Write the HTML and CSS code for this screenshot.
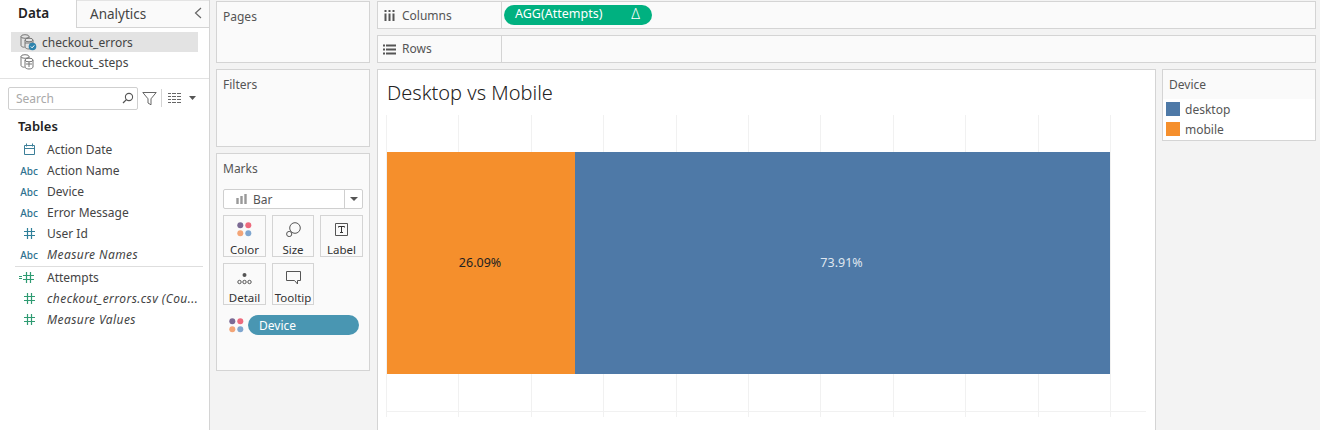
FILE: index.html
```html
<!DOCTYPE html>
<html lang="en">
<head>
<meta charset="utf-8">
<title>Desktop vs Mobile</title>
<link rel="stylesheet" href="styles.css">
</head>
<body>
<div class="app">
  <aside class="side">
    <div class="tabs">
      <div class="tab tab-active">Data</div>
      <div class="tab tab-other">Analytics</div>
      <div class="collapse"><svg width="8" height="12" viewBox="0 0 8 12"><path d="M7 1 1.500 6 7 11" fill="none" stroke="#666" stroke-width="1.200"/></svg></div>
    </div>
    <div class="sources">
      <div class="source source-on">
        <svg class="dbicon" width="18" height="18" viewBox="0 0 18 18"><g fill="none" stroke="#777"><ellipse cx="6" cy="3.500" rx="4" ry="1.800"/><path d="M2 3.500v9c0 1 2 1.800 3.500 1.800M10 3.500v2"/><ellipse cx="10" cy="7" rx="4" ry="1.800" fill="#e3e3e3"/><path d="M6 7v7c0 1 2 2 4 2s4-1 4-2V7M6 10h8"/></g><circle cx="13.500" cy="13.500" r="3.800" fill="#2d83ad"/><path d="m11.800 13.500 1.300 1.300 2.200-2.400" fill="none" stroke="#fff"/></svg>
        <span>checkout_errors</span>
      </div>
      <div class="source">
        <svg class="dbicon" width="18" height="18" viewBox="0 0 18 18"><g fill="none" stroke="#777"><ellipse cx="6" cy="3.500" rx="4" ry="1.800"/><path d="M2 3.500v9c0 1 2 1.800 3.500 1.800M10 3.500v2"/><ellipse cx="10" cy="7" rx="4" ry="1.800" fill="#fff"/><path d="M6 7v7c0 1 2 2 4 2s4-1 4-2V7M7 11h6M10 9v5"/></g></svg>
        <span>checkout_steps</span>
      </div>
    </div>
    <div class="searchrow">
      <div class="search">
        <span class="search-text">Search</span>
        <svg width="12" height="12" viewBox="0 0 12 12"><circle cx="7" cy="5" r="3.600" fill="none" stroke="#555" stroke-width="1.100"/><path d="M4.400 7.600 1 11" stroke="#555" stroke-width="1.300"/></svg>
      </div>
      <svg class="funnel" width="15" height="15" viewBox="0 0 15 15"><path d="M.8 1.500h13.400L9 7.800v6L6 12V7.800z" fill="none" stroke="#666"/></svg>
      <span class="vsep"></span>
      <svg class="listicon" width="13" height="10" viewBox="0 0 13 10"><path d="M0 .5h3M4 .5h4M9 .5h4M0 3.500h3M4 3.500h4M9 3.500h4M0 6.500h3M4 6.500h4M9 6.500h4M0 9.500h3M4 9.500h4M9 9.500h4" stroke="#666"/></svg>
      <svg class="caret" width="7" height="4" viewBox="0 0 7 4"><path d="M0 0h7L3.500 4z" fill="#555"/></svg>
    </div>
    <div class="tables">Tables</div>
    <ul class="fields">
      <li class="field"><span class="ficon"><svg width="13" height="13" viewBox="0 0 13 13"><path d="M1.500 2.500h10v9h-10zM1.500 5.500h10M3.500 .5v3M9.500 .5v3" fill="none" stroke="#3c7f99"/></svg></span><span>Action Date</span></li>
      <li class="field"><span class="ficon abc">Abc</span><span>Action Name</span></li>
      <li class="field"><span class="ficon abc">Abc</span><span>Device</span></li>
      <li class="field"><span class="ficon abc">Abc</span><span>Error Message</span></li>
      <li class="field"><span class="ficon"><svg width="11" height="11" viewBox="0 0 11 11"><path d="M3.500 0v11M7.500 0v11M0 3.500h11M0 7.500h11" stroke="#2f7f99" stroke-width="1.200"/></svg></span><span>User Id</span></li>
      <li class="field"><span class="ficon abc">Abc</span><span class="ital">Measure Names</span></li>
      <li class="field field-rule"><span class="ficon ficon-calc"><svg width="15" height="11" viewBox="0 0 15 11"><path d="M0 4.500h3M0 6.500h3M7.500 0v11M11.500 0v11M4 3.500h11M4 7.500h11" stroke="#2f9b72" stroke-width="1.200"/></svg></span><span>Attempts</span></li>
      <li class="field"><span class="ficon"><svg width="11" height="11" viewBox="0 0 11 11"><path d="M3.500 0v11M7.500 0v11M0 3.500h11M0 7.500h11" stroke="#2f9b72" stroke-width="1.200"/></svg></span><span class="ital">checkout_errors.csv (Cou...</span></li>
      <li class="field"><span class="ficon"><svg width="11" height="11" viewBox="0 0 11 11"><path d="M3.500 0v11M7.500 0v11M0 3.500h11M0 7.500h11" stroke="#2f9b72" stroke-width="1.200"/></svg></span><span class="ital">Measure Values</span></li>
    </ul>
  </aside>

  <section class="cards">
    <div class="card card-pages"><div class="card-title">Pages</div></div>
    <div class="card card-filters"><div class="card-title">Filters</div></div>
    <div class="card card-marks">
      <div class="card-title">Marks</div>
      <div class="marktype">
        <span class="marktype-main">
          <svg width="11" height="10" viewBox="0 0 11 10"><path d="M1.500 4v6M5.500 2v8M9.500 0v10" stroke="#999" stroke-width="2.400"/></svg>
          <span>Bar</span>
        </span>
        <span class="marktype-drop"><svg width="8" height="4" viewBox="0 0 8 4"><path d="M0 0h8L4 4z" fill="#555"/></svg></span>
      </div>
      <div class="markgrid">
        <div class="markbtn">
          <svg width="15" height="15" viewBox="0 0 15 15"><circle cx="3.300" cy="3.300" r="3" fill="#7b6a94"/><circle cx="11.300" cy="3.300" r="3" fill="#ee6a7d"/><circle cx="3.300" cy="11.300" r="3" fill="#f3a577"/><circle cx="11.300" cy="11.300" r="3" fill="#7fa6cf"/></svg>
          <span>Color</span>
        </div>
        <div class="markbtn">
          <svg width="15" height="15" viewBox="0 0 15 15"><circle cx="9" cy="6" r="5.300" fill="none" stroke="#555"/><circle cx="3.200" cy="12" r="2.600" fill="#fafafa" stroke="#555"/></svg>
          <span>Size</span>
        </div>
        <div class="markbtn">
          <svg width="15" height="15" viewBox="0 0 15 15"><path d="M1.500 1.500h12v12h-12z" fill="none" stroke="#555"/><path d="M4.500 5.500v-1h6v1M7.500 4.500v6M6 10.500h3" fill="none" stroke="#333"/></svg>
          <span>Label</span>
        </div>
        <div class="markbtn">
          <svg width="15" height="15" viewBox="0 0 15 15"><circle cx="7.500" cy="5" r="2" fill="#555"/><g fill="none" stroke="#555"><circle cx="2.500" cy="12" r="1.700"/><circle cx="7.500" cy="12" r="1.700"/><circle cx="12.500" cy="12" r="1.700"/></g></svg>
          <span>Detail</span>
        </div>
        <div class="markbtn">
          <svg width="15" height="15" viewBox="0 0 15 15"><path d="M.5 1.500h14v9h-3v3.500l-3-3.500H.5z" fill="none" stroke="#555"/></svg>
          <span>Tooltip</span>
        </div>
      </div>
      <div class="markpill">
        <svg width="15" height="15" viewBox="0 0 15 15"><circle cx="3.300" cy="3.300" r="3" fill="#7b6a94"/><circle cx="11.300" cy="3.300" r="3" fill="#ee6a7d"/><circle cx="3.300" cy="11.300" r="3" fill="#f3a577"/><circle cx="11.300" cy="11.300" r="3" fill="#7fa6cf"/></svg>
        <div class="pill pill-blue">Device</div>
      </div>
    </div>
  </section>

  <main class="work">
    <div class="shelf">
      <div class="shelf-label">
        <svg width="13" height="11" viewBox="0 0 11 11"><path d="M1.500 0v2M1.500 3.500V11M5.500 0v2M5.500 3.500V11M9.500 0v2M9.500 3.500V11" stroke="#555" stroke-width="2"/></svg>
        <span>Columns</span>
      </div>
      <div class="shelf-body">
        <div class="pill pill-green"><span>AGG(Attempts)</span><span class="delta">&#916;</span></div>
      </div>
    </div>
    <div class="shelf">
      <div class="shelf-label">
        <svg width="13" height="11" viewBox="0 0 13 11"><path d="M0 1.500h2M3 1.500h10M0 5.500h2M3 5.500h10M0 9.500h2M3 9.500h10" stroke="#555" stroke-width="1.800"/></svg>
        <span class="rows-text">Rows</span>
      </div>
      <div class="shelf-body"></div>
    </div>
    <div class="viewrow">
      <div class="view">
        <h1 class="view-title">Desktop vs Mobile</h1>
        <div class="chart">
          <div class="grid">
            <span></span><span></span><span></span><span></span><span></span><span></span><span></span><span></span><span></span><span></span>
          </div>
          <div class="stack">
            <div class="bar bar-mobile">26.09%</div>
            <div class="bar bar-desktop">73.91%</div>
          </div>
        </div>
      </div>
      <aside class="legend">
        <div class="legend-title">Device</div>
        <div class="legend-body">
          <div class="legend-item"><span class="swatch swatch-desktop"></span><span>desktop</span></div>
          <div class="legend-item"><span class="swatch swatch-mobile"></span><span>mobile</span></div>
        </div>
      </aside>
    </div>
  </main>
</div>
</body>
</html>
```
FILE: styles.css
```css
* { box-sizing: border-box; }
html, body { margin: 0; height: 100%; overflow: hidden; }
body { font-family: "Noto Sans", "Open Sans", sans-serif; font-size: 12px; color: #333; background: #f3f3f3; }
.app { display: flex; width: 1320px; height: 430px; }

.side { width: 210px; flex: none; background: #fff; border-right: 1px solid #d4d4d4; }
.tabs { display: flex; height: 28px; align-items: stretch; }
.tab { font-size: 13.500px; line-height: 27px; }
.tab-active { width: 77px; padding-left: 18px; font-weight: 600; color: #222; border-right: 1px solid #d4d4d4; }
.tab-other { flex: 1; padding-left: 13px; color: #444; background: #fafafa; border-bottom: 1px solid #d4d4d4; border-top: 1px solid #e4e4e4; line-height: 26px; }
.collapse { width: 15px; background: #fafafa; border-bottom: 1px solid #d4d4d4; border-top: 1px solid #e4e4e4; padding-top: 6px; }
.collapse svg { display: block; }
.sources { padding: 4px 11px 7px; height: 51px; border-bottom: 1px solid #e2e2e2; }
.source { display: flex; align-items: center; gap: 4px; height: 20px; padding-left: 8px; color: #444; }
.source-on { background: #e3e3e3; }
.source span { font-size: 12px; margin-left: 1px; }
.dbicon { flex: none; }
.searchrow { display: flex; align-items: center; height: 24px; margin-top: 7px; padding-left: 8px; }
.search { width: 130px; height: 23px; border: 1px solid #cfcfcf; border-radius: 2px; display: flex; align-items: center; justify-content: space-between; padding: 0 3px 0 7px; }
.search-text { color: #a9a9a9; font-size: 12px; }
.funnel { margin-left: 4px; }
.vsep { width: 1px; height: 18px; background: #d4d4d4; margin-left: 4px; }
.listicon { margin-left: 6px; }
.caret { margin-left: 8px; }
.tables { font-weight: 600; font-size: 13px; color: #222; padding-left: 18px; margin-top: 6px; line-height: 20px; height: 21px; }
.fields { list-style: none; margin: 2px 0 0; padding: 0; }
.field { display: flex; align-items: center; height: 21px; color: #444; }
.field-rule { margin: 1px 6px 0 15px; height: 22px; border-top: 1px solid #dedede; }
.ficon { width: 47px; flex: none; display: flex; justify-content: center; padding-left: 12px; color: #3c7f99; }
.ficon-calc { width: 32px; padding-left: 0; padding-right: 13px; justify-content: flex-end; }
.abc { font-size: 10px; font-weight: 500; color: #2f7290; padding-left: 11px; }
.ital { font-style: italic; letter-spacing: .42px; white-space: nowrap; }

.cards { width: 154px; flex: none; margin: 1px 0 0 6px; display: flex; flex-direction: column; gap: 6px; }
.card { border: 1px solid #d4d4d4; background: #fafafa; padding: 7px 6px; }
.card-title { color: #555; line-height: 16px; }
.card-pages { height: 62px; }
.card-filters { height: 78px; }
.card-marks { height: 218px; }
.marktype { display: flex; height: 20px; margin-top: 12px; border: 1px solid #cfcfcf; border-radius: 2px; background: #fff; }
.marktype-main { flex: 1; display: flex; align-items: center; gap: 6px; padding-left: 12px; color: #555; }
.marktype-drop { width: 18px; border-left: 1px solid #cfcfcf; display: flex; align-items: center; justify-content: center; }
.markgrid { display: grid; grid-template-columns: 43px 42px 43px; column-gap: 6px; row-gap: 6px; margin-top: 6px; }
.markbtn { height: 42px; border: 1px solid #d4d4d4; background: #fafafa; display: flex; flex-direction: column; align-items: center; padding-top: 6px; font-size: 11.500px; line-height: 14px; gap: 6px; white-space: nowrap; }
.markbtn svg { flex: none; }
.markpill { display: flex; align-items: center; gap: 4px; margin: 10px 0 0 6px; }
.pill { border-radius: 10px; height: 20px; color: #fff; line-height: 19px; }
.pill-blue { width: 111px; background: #4996b2; padding-left: 11px; font-size: 12px; line-height: 21px; }

.work { flex: 1; min-width: 0; margin: 1px 4px 0 7px; display: flex; flex-direction: column; gap: 6px; }
.shelf { display: flex; height: 28px; border: 1px solid #d4d4d4; background: #fafafa; }
.shelf-label { width: 124px; flex: none; display: flex; align-items: center; gap: 6px; padding-left: 5px; border-right: 1px solid #d4d4d4; color: #555; font-size: 12px; }
.rows-text { margin-top: -1px; }
.shelf-body { flex: 1; display: flex; align-items: center; padding-left: 2px; }
.pill-green { width: 148px; background: #00b180; display: flex; justify-content: space-between; padding: 0 11px; font-size: 12.500px; line-height: 18px; }
.delta { font-size: 14px; font-weight: 300; padding-right: 1px; }
.viewrow { flex: 1; min-height: 0; display: flex; gap: 6px; align-items: flex-start; }
.view { width: 779px; height: 370px; flex: none; background: #fff; border: 1px solid #d4d4d4; padding: 0 8px; }
.view-title { margin: 10px 0 0 1px; font-size: 20px; font-weight: 300; color: #222; line-height: 26px; height: 35px; }
.chart { position: relative; height: 302px; padding-top: 37px; }
.grid { position: absolute; inset: 0 auto 0 0; width: 725px; display: flex; border-right: 1px solid #f1f1f1; }
.grid::after { content: ""; position: absolute; left: 0; width: 760px; bottom: 5px; border-bottom: 1px solid #f1f1f1; }
.grid span { flex: 1; border-left: 1px solid #f1f1f1; }
.stack { position: relative; display: flex; width: 723px; height: 222px; margin-left: 1px; }
.bar { display: flex; align-items: center; justify-content: center; font-size: 12.500px; padding: 0 2px 2px 0; }
.bar-mobile { width: 188px; color: #222; flex: none; background: #f58f2c; }
.bar-desktop { flex: 1; background: #4e79a7; color: #dfe6ef; }

.legend { width: 154px; flex: none; height: 72px; border: 1px solid #d4d4d4; background: #fff; }
.legend-title { height: 29px; background: #fafafa; padding: 7px 6px 0; color: #555; line-height: 16px; }
.legend-item { display: flex; align-items: center; gap: 5px; height: 20px; padding-left: 3px; color: #555; }
.swatch { width: 14px; height: 14px; flex: none; }
.swatch-desktop { background: #4e79a7; }
.swatch-mobile { background: #f58f2c; }
```
